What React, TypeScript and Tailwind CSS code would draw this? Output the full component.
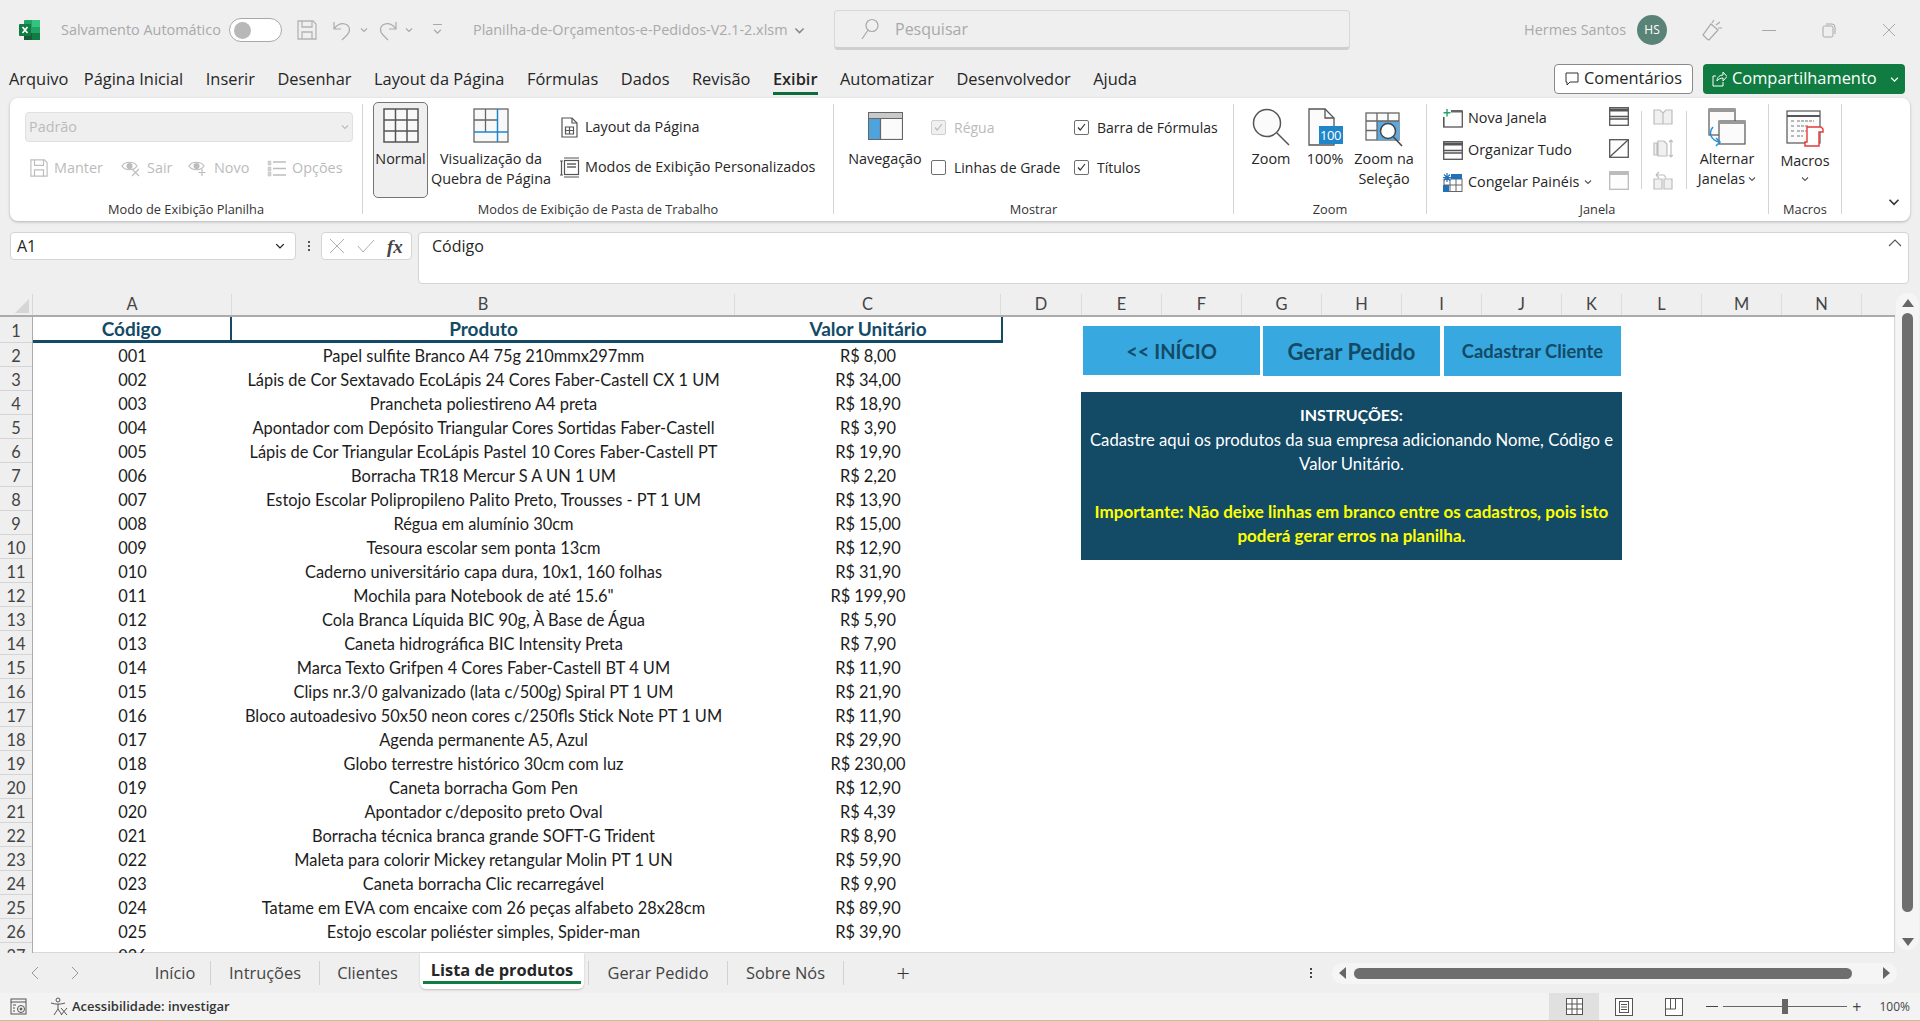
import React from 'react';

const rows: [string, string, string][] = [
  ['001', 'Papel sulfite Branco A4 75g 210mmx297mm', 'R$ 8,00'],
  ['002', 'Lápis de Cor Sextavado EcoLápis 24 Cores Faber-Castell CX 1 UM', 'R$ 34,00'],
  ['003', 'Prancheta poliestireno A4 preta', 'R$ 18,90'],
  ['004', 'Apontador com Depósito Triangular Cores Sortidas Faber-Castell', 'R$ 3,90'],
  ['005', 'Lápis de Cor Triangular EcoLápis Pastel 10 Cores Faber-Castell PT', 'R$ 19,90'],
  ['006', 'Borracha TR18 Mercur S A UN 1 UM', 'R$ 2,20'],
  ['007', 'Estojo Escolar Polipropileno Palito Preto, Trousses - PT 1 UM', 'R$ 13,90'],
  ['008', 'Régua em alumínio 30cm', 'R$ 15,00'],
  ['009', 'Tesoura escolar sem ponta 13cm', 'R$ 12,90'],
  ['010', 'Caderno universitário capa dura, 10x1, 160 folhas', 'R$ 31,90'],
  ['011', 'Mochila para Notebook de até 15.6"', 'R$ 199,90'],
  ['012', 'Cola Branca Líquida BIC 90g, À Base de Água', 'R$ 5,90'],
  ['013', 'Caneta hidrográfica BIC Intensity Preta', 'R$ 7,90'],
  ['014', 'Marca Texto Grifpen 4 Cores Faber-Castell BT 4 UM', 'R$ 11,90'],
  ['015', 'Clips nr.3/0 galvanizado (lata c/500g) Spiral PT 1 UM', 'R$ 21,90'],
  ['016', 'Bloco autoadesivo 50x50 neon cores c/250fls Stick Note PT 1 UM', 'R$ 11,90'],
  ['017', 'Agenda permanente A5, Azul', 'R$ 29,90'],
  ['018', 'Globo terrestre histórico 30cm com luz', 'R$ 230,00'],
  ['019', 'Caneta borracha Gom Pen', 'R$ 12,90'],
  ['020', 'Apontador c/deposito preto Oval', 'R$ 4,39'],
  ['021', 'Borracha técnica branca grande SOFT-G Trident', 'R$ 8,90'],
  ['022', 'Maleta para colorir Mickey retangular Molin PT 1 UN', 'R$ 59,90'],
  ['023', 'Caneta borracha Clic recarregável', 'R$ 9,90'],
  ['024', 'Tatame em EVA com encaixe com 26 peças alfabeto 28x28cm', 'R$ 89,90'],
  ['025', 'Estojo escolar poliéster simples, Spider-man', 'R$ 39,90'],
  ['026', '', ''],
];

const tabs = ['Arquivo', 'Página Inicial', 'Inserir', 'Desenhar', 'Layout da Página', 'Fórmulas', 'Dados', 'Revisão', 'Exibir', 'Automatizar', 'Desenvolvedor', 'Ajuda'];

const columns: [string, string][] = [
  ['A', 'w-[199px]'], ['B', 'w-[503px]'], ['C', 'w-[266px]'], ['D', 'w-[81px]'],
  ['E', 'w-[80px]'], ['F', 'w-[80px]'], ['G', 'w-[80px]'], ['H', 'w-[80px]'],
  ['I', 'w-[80px]'], ['J', 'w-[80px]'], ['K', 'w-[60px]'], ['L', 'w-[80px]'],
  ['M', 'w-[80px]'], ['N', 'w-[80px]'],
];

const Chevron = ({ size = 8, color = '#555' }: { size?: number; color?: string }) => (
  <svg width={size} height={size} viewBox="0 0 8 8" fill="none" stroke={color} strokeWidth="1.1"><path d="M1 2.5 4 5.5 7 2.5" /></svg>
);

const ExcelLogo = () => (
  <svg width="21" height="20" viewBox="0 0 21 20">
    <rect x="5" y="0" width="16" height="20" rx="1" fill="#21a366" />
    <rect x="13" y="0" width="8" height="7" fill="#33c481" />
    <rect x="13" y="13" width="8" height="7" fill="#107c41" />
    <rect x="5" y="13" width="8" height="7" fill="#185c37" />
    <rect x="0" y="4" width="12" height="12" rx="1" fill="#107c41" />
    <path d="M3.5 7 8.5 13M8.5 7 3.5 13" stroke="#fff" strokeWidth="1.7" />
  </svg>
);

const SaveIcon = ({ color, size = 20 }: { color: string; size?: number }) => (
  <svg width={size} height={size} viewBox="0 0 20 20" fill="none" stroke={color} strokeWidth="1.3">
    <path d="M1 1h15l3 3v15H1z" /><path d="M5 1v6h10V1M5 19v-7h10v7" />
  </svg>
);

const UndoIcon = ({ flip = false }: { flip?: boolean }) => (
  <svg width="19" height="21" viewBox="0 0 19 21" fill="none" stroke="#ababab" strokeWidth="1.2" className={flip ? '-scale-x-100' : ''}>
    <path d="M1 2v7h7M1 9c3-4 7-6 11-5 5 1.500 6 7 2 11l-5 5" />
  </svg>
);

const GridIcon = () => (
  <svg width="36" height="35" viewBox="0 0 36 35" fill="#f8f8f8" stroke="#555" strokeWidth="1.500">
    <rect x="1" y="1" width="34" height="33" />
    <path d="M12.500 1v33M24 1v33M1 12h34M1 23h34" fill="none" />
  </svg>
);

const BreakIcon = () => (
  <svg width="36" height="35" viewBox="0 0 36 35" fill="#f8f8f8" stroke="#666" strokeWidth="1.300">
    <rect x="1" y="1" width="34" height="33" />
    <path d="M12.500 1v23M1 12h24" fill="none" />
    <path d="M24.500 1v33M1 24h34" fill="none" stroke="#1a86d0" strokeWidth="1.500" />
  </svg>
);

const PageLayoutIcon = () => (
  <svg width="17" height="21" viewBox="0 0 17 21" fill="#fff" stroke="#555" strokeWidth="1.200">
    <path d="M1 1h10l5 5v14H1z" /><path d="M11 1v5h5" fill="none" />
    <path d="M4.500 10h8v7h-8zM8.500 10v7M4.500 13.500h8" fill="none" />
  </svg>
);

const CustomViewIcon = () => (
  <svg width="21" height="21" viewBox="0 0 21 21" fill="none" stroke="#555" strokeWidth="1.200">
    <path d="M5 1h15M5 20h15M1 4h3M1 18h3M2.500 4v14" />
    <rect x="5.500" y="3.500" width="14" height="14" fill="#fff" />
    <path d="M8 7h9M8 10h9" stroke="#888" strokeWidth="2" />
  </svg>
);

const EyeIcon = ({ plus = false }: { plus?: boolean }) => (
  <svg width="20" height="18" viewBox="0 0 20 18" fill="none" stroke="#bdbdbd" strokeWidth="1.200">
    <path d="M1 7c3-5 12-5 15 0-3 5-12 5-15 0z" /><circle cx="8.500" cy="7" r="2.500" fill="#bdbdbd" />
    {plus ? <path d="M14 10v7M10.500 13.500h7" /> : <path d="M11 10l7 7M18 10l-7 7" />}
  </svg>
);

const ListIcon = () => (
  <svg width="19" height="17" viewBox="0 0 19 17" fill="none" stroke="#bdbdbd" strokeWidth="1.300">
    <path d="M6 2h13M6 8.500h13M6 15h13" /><path d="M1 1h3v4H1zM1 7h3v4H1zM1 12h3v4H1z" fill="#d4d4d4" strokeWidth="0.500" />
  </svg>
);

const NavIcon = () => (
  <svg width="35" height="28" viewBox="0 0 35 28" fill="#fbfbfb" stroke="#666" strokeWidth="1.200">
    <rect x="0.500" y="0.500" width="34" height="27" />
    <rect x="1" y="1" width="33" height="5" fill="#c9c9c9" stroke="none" />
    <rect x="1" y="7" width="11" height="20" fill="#4fa3dc" stroke="none" />
    <path d="M12.500 6v21M1 6.500h33" fill="none" />
  </svg>
);

const ZoomIcon = () => (
  <svg width="38" height="38" viewBox="0 0 38 38" fill="#fbfbfb" stroke="#555" strokeWidth="1.500">
    <circle cx="15" cy="15" r="13.500" /><path d="M25 25 37 37" fill="none" />
  </svg>
);

const HundredIcon = () => (
  <div className="relative w-[35px] h-[38px]">
    <svg width="28" height="38" viewBox="0 0 28 38" fill="#fbfbfb" stroke="#555" strokeWidth="1.300">
      <path d="M1 1h16l9 9v27H1z" /><path d="M17 1v9h9" fill="none" />
    </svg>
    <div className="absolute right-0 bottom-[2px] w-[24px] h-[18px] bg-[#1f86c9] text-white text-[13px] leading-[18px] text-center font-['Open_Sans',sans-serif] tracking-[-0.5px]">100</div>
  </div>
);

const ZoomSelIcon = () => (
  <svg width="39" height="36" viewBox="0 0 39 36" fill="none" stroke="#666" strokeWidth="1.300">
    <rect x="1" y="1" width="33" height="27" fill="#fbfbfb" />
    <rect x="12" y="9" width="22" height="19" fill="#5aa9e0" stroke="none" />
    <path d="M12 1v27M23 1v8M1 9h33M1 18.500h11" />
    <circle cx="23" cy="19" r="7.500" fill="#fff" stroke="#444" strokeWidth="1.500" /><path d="M28.500 25 37 34" stroke="#444" strokeWidth="1.500" />
  </svg>
);

const WinIcon = ({ kind }: { kind: 'new' | 'arrange' | 'freeze' | 'split' | 'hide' | 'unhide' }) => {
  if (kind === 'freeze') {
    return (
      <svg width="20" height="19" viewBox="0 0 20 19" fill="none">
        <rect x="1" y="6" width="18" height="12.500" fill="#fff" stroke="#666" />
        <rect x="0" y="12" width="6" height="7" fill="#1f72b8" />
        <rect x="8" y="1" width="11" height="5" fill="#1f72b8" />
        <path d="M7 6v13M13 6v13M1 12h18" stroke="#666" />
        <path d="M4 0v9M0 4.500h8M1 1.500l6 6M7 1.500l-6 6" stroke="#1f72b8" strokeWidth="1.200" />
      </svg>
    );
  }
  const c = kind === 'unhide' ? '#bbb' : '#555';
  return (
    <svg width="20" height="19" viewBox="0 0 20 19" fill="#fdfdfd" stroke={c} strokeWidth="1.300">
      <rect x="0.700" y={kind === 'new' ? 2 : 0.700} width="18.600" height={kind === 'new' ? 16 : 17.600} />
      {kind === 'new' && <rect x="8" y="1" width="11" height="2.500" fill="#666" stroke="none" />}
      {kind === 'new' && <rect x="0" y="0" width="8" height="8" fill="#fff" stroke="none" />}
      {kind === 'new' && <path d="M4 0v7.500M0.500 3.800h7" fill="none" stroke="#21a366" strokeWidth="1.400" />}
      {kind === 'new' && <path d="M0.700 8v10" fill="none" />}
      {(kind === 'arrange' || kind === 'split') && <path d="M0.700 3h18.600" strokeWidth="3" />}
      {(kind === 'arrange' || kind === 'split') && <path d="M0.700 9.500h18.600M0.700 12h18.600" />}
      {kind === 'hide' && <path d="M0.700 18 19 1" />}
      {kind === 'unhide' && <path d="M0.700 2.500h18.600" strokeWidth="3" />}
    </svg>
  );
};

const SideIcon = ({ v }: { v: number }) => (
  <svg width="20" height="19" viewBox="0 0 20 19" fill="#f0f0f0" stroke="#bdbdbd" strokeWidth="1.200">
    {v === 1 && <path d="M1 3h6l3 3v11H1zM10 6l3-3h6v14h-9z" />}
    {v === 2 && <><path d="M1 4h3v12H1zM5 2h6l3 3v12H5z" /><path d="M18 1v17M16 3l2-2 2 2M16 16l2 2 2-2" fill="none" /></>}
    {v === 3 && <><path d="M1 8h8v10H1zM11 8h8v10h-8z" /><path d="M3 4l3-3M3 4l3 3M3 4h8l2 3" fill="none" /></>}
  </svg>
);

const SwitchIcon = () => (
  <svg width="38" height="40" viewBox="0 0 38 40" fill="#fbfbfb" stroke="#555" strokeWidth="1.200">
    <rect x="1" y="1" width="26" height="26" /><rect x="1" y="1" width="26" height="3" fill="#999" stroke="none" />
    <rect x="11" y="13" width="26" height="23" /><rect x="11" y="13" width="26" height="3" fill="#999" stroke="none" />
    <path d="M5 19c-5 6-2 13 6 15M8 30l4 4-4 4" fill="none" stroke="#2b8fd6" strokeWidth="1.500" />
  </svg>
);

const MacroIcon = () => (
  <svg width="38" height="38" viewBox="0 0 38 38" fill="#fbfbfb" stroke="#555" strokeWidth="1.200">
    <rect x="1" y="1" width="33" height="32" />
    <path d="M1 6h33" strokeWidth="1.800" fill="none" />
    <path d="M5 11h4M11 11h17M5 16h3M11 16h12M5 21h3M11 21h9M5 26h3M11 26h6" fill="none" stroke="#777" strokeDasharray="3 1" />
    <path d="M21 17h14l2 2v3h-4v14H19v-4h2z" fill="#fff" stroke="#e53935" strokeWidth="1.400" />
  </svg>
);

const Check = ({ on = false, off = false }: { on?: boolean; off?: boolean }) => (
  <span className={`w-[15px] h-[15px] flex items-center justify-center rounded-[2px] border ${off ? 'border-[#cfcfcf] bg-[#f0f0f0]' : 'border-[#6e6e6e] bg-white'}`}>
    {on && <svg width="9" height="8" viewBox="0 0 9 8" fill="none" stroke={off ? '#bbb' : '#333'} strokeWidth="1.200"><path d="M1 4.500 3.200 7 8 1" /></svg>}
  </span>
);

const BigButton = ({ icon, lines, w, active }: { icon: React.ReactNode; lines: React.ReactNode[]; w: string; active?: boolean }) => (
  <div className={`${w} flex flex-col items-center shrink-0 ${active ? 'bg-[#efefef] border border-[#757575] rounded-[5px] h-[96px] -mt-[2px] pt-[5px]' : 'pt-[4px]'}`}>
    <div className="h-[41px] flex items-start">{icon}</div>
    {lines.map((l, i) => <div key={i} className="leading-[20px] whitespace-nowrap">{l}</div>)}
  </div>
);

const RibbonGroup = ({ w, label, children }: { w: string; label: string; children: React.ReactNode }) => (
  <div className={`${w} shrink-0 h-[110px] flex flex-col border-r border-[#d4d4d4]`}>
    <div className="flex-1 flex min-h-0">{children}</div>
    <div className="h-[16px] -mb-[3px] leading-[16px] text-center text-[12.8px] text-[#333] whitespace-nowrap">{label}</div>
  </div>
);

const SmallItem = ({ icon, text, w }: { icon: React.ReactNode; text: string; w: string }) => (
  <div className={`${w} flex items-center gap-[6px] text-[#bbb]`}>{icon}<span>{text}</span></div>
);

const CheckRow = ({ text, on, off }: { text: string; on?: boolean; off?: boolean }) => (
  <div className={`h-[20px] flex items-center gap-[8px] whitespace-nowrap text-[14px] ${off ? 'text-[#bbb]' : ''}`}><Check on={on} off={off} /><span>{text}</span></div>
);

const SheetTab = ({ text, w, sep = true }: { text: string; w: string; sep?: boolean }) => (
  <div className={`${w} h-[24px] flex items-center justify-center text-[#444] whitespace-nowrap ${sep ? 'border-r border-[#d2d2d2]' : ''}`}>{text}</div>
);

export default function App() {
  return (
    <div className="w-full h-[1021px] overflow-hidden bg-[#efefef] flex flex-col font-['Open_Sans',sans-serif] text-[14.4px] text-[#262626]">
      {/* title bar */}
      <div className="h-[60px] shrink-0 flex items-center text-[#a9a9a9]">
        <div className="w-[61px] pl-[19px] shrink-0"><ExcelLogo /></div>
        <div className="w-[168px] shrink-0 whitespace-nowrap">Salvamento Automático</div>
        <div className="w-[53px] h-[24px] shrink-0 rounded-full border border-[#a8a8a8] bg-white flex items-center pl-[4px]">
          <div className="w-[17px] h-[17px] rounded-full bg-[#b8b8b8]" />
        </div>
        <div className="ml-[15px] shrink-0"><SaveIcon color="#b4b4b4" /></div>
        <div className="ml-[16px] shrink-0"><UndoIcon /></div>
        <div className="ml-[8px] shrink-0"><Chevron color="#a9a9a9" /></div>
        <div className="ml-[10px] shrink-0"><UndoIcon flip /></div>
        <div className="ml-[8px] shrink-0"><Chevron color="#a9a9a9" /></div>
        <div className="ml-[20px] shrink-0 w-[40px] flex flex-col items-start">
          <div className="w-[9px] border-t border-[#a9a9a9] mb-[2px]" />
          <Chevron color="#a9a9a9" size={9} />
        </div>
        <div className="shrink-0 w-[321px] whitespace-nowrap">Planilha-de-Orçamentos-e-Pedidos-V2.1-2.xlsm</div>
        <div className="shrink-0 w-[40px]"><Chevron color="#888" size={11} /></div>
        <div className="shrink-0 w-[516px] h-[40px] rounded-[4px] border border-[#d8d8d8] border-b-[3px] border-b-[#cfcfcf] flex items-center pl-[26px] gap-[16px] text-[16px]">
          <svg width="18" height="22" viewBox="0 0 18 22" fill="none" stroke="#a9a9a9" strokeWidth="1.200"><circle cx="11" cy="7.500" r="6" /><path d="M7 12 1 21" /></svg>
          <span>Pesquisar</span>
        </div>
        <div className="flex-1" />
        <div className="shrink-0 whitespace-nowrap mr-[11px]">Hermes Santos</div>
        <div className="shrink-0 w-[30px] h-[30px] rounded-full bg-[#5a8377] text-white text-[12px] flex items-center justify-center">HS</div>
        <div className="shrink-0 ml-[34px]">
          <svg width="22" height="24" viewBox="0 0 22 24" fill="none" stroke="#a9a9a9" strokeWidth="1.200">
            <path d="M6 21 2 17 10 6l7 6-9 10zM11 5l2-3M15 7l4-3M17 10l4 0" />
          </svg>
        </div>
        <div className="shrink-0 ml-[39px] w-[14px] border-t border-[#a9a9a9]" />
        <div className="shrink-0 ml-[46px]">
          <svg width="14" height="15" viewBox="0 0 14 15" fill="none" stroke="#a9a9a9"><rect x="1" y="3" width="10" height="11" rx="1.500" /><path d="M4 1h6a3 3 0 0 1 3 3v7" /></svg>
        </div>
        <div className="shrink-0 ml-[46px] mr-[24px]">
          <svg width="14" height="14" viewBox="0 0 14 14" stroke="#a9a9a9"><path d="M1 1l12 12M13 1 1 13" /></svg>
        </div>
      </div>

      {/* ribbon tabs */}
      <div className="h-[38px] shrink-0 flex items-stretch pl-[9px] text-[16.4px]">
        <div className="flex gap-[22.5px]">
          {tabs.map(t => (
            <div key={t} className={`h-[35px] pt-[7px] leading-[24px] whitespace-nowrap border-b-[3px] ${t === 'Exibir' ? 'border-[#0e6b3c] font-semibold' : 'border-transparent'} ${t === 'Arquivo' ? '-mr-[7px]' : ''}`}>{t}</div>
          ))}
        </div>
        <div className="flex-1" />
        <div className="flex gap-[10px] mt-[4px] mr-[15px] h-[30px]">
          <div className="w-[139px] rounded-[4px] border border-[#8a8a8a] bg-white flex items-center justify-center gap-[5px]">
            <svg width="14" height="15" viewBox="0 0 14 15" fill="none" stroke="#333"><path d="M1 1h12v9H5l-3 3V10H1z" /></svg>
            <span className="-mt-[1px]">Comentários</span>
          </div>
          <div className="w-[202px] rounded-[4px] bg-[#107c41] text-white flex items-center pl-[9px] gap-[5px]">
            <svg width="15" height="16" viewBox="0 0 15 16" fill="none" stroke="#fff"><path d="M4 5H1v10h10v-4M5 10c0-4 3-6 6-6V1l4 4.500L11 10V7c-2 0-5 1-6 3z" /></svg>
            <span className="flex-1 whitespace-nowrap -mt-[1px]">Compartilhamento</span>
            <span className="pr-[6px]"><Chevron color="#fff" size={9} /></span>
          </div>
        </div>
      </div>

      {/* ribbon */}
      <div className="h-[123px] shrink-0 mx-[10px] bg-white rounded-[8px] shadow-[0_1px_3px_rgba(0,0,0,0.25)] flex pt-[6px]">
        <RibbonGroup w="w-[353px]" label="Modo de Exibição Planilha">
          <div className="flex flex-col">
            <div className="ml-[15px] mt-[8px] w-[328px] h-[30px] rounded-[4px] border border-[#e0e0e0] bg-[#efefef] flex items-center justify-between px-[3px] text-[#bbb]">
              <span>Padrão</span><Chevron color="#bbb" />
            </div>
            <div className="ml-[20px] mt-[16px] flex h-[20px]">
              <SmallItem icon={<SaveIcon color="#bdbdbd" size={18} />} text="Manter" w="w-[91px]" />
              <SmallItem icon={<EyeIcon />} text="Sair" w="w-[67px]" />
              <SmallItem icon={<EyeIcon plus />} text="Novo" w="w-[79px]" />
              <SmallItem icon={<ListIcon />} text="Opções" w="w-[80px]" />
            </div>
          </div>
        </RibbonGroup>
        <RibbonGroup w="w-[471px]" label="Modos de Exibição de Pasta de Trabalho">
          <div className="pl-[10px] flex items-start">
            <BigButton active w="w-[55px]" icon={<GridIcon />} lines={['Normal']} />
            <BigButton w="w-[126px]" icon={<BreakIcon />} lines={['Visualização da', 'Quebra de Página']} />
            <div className="flex flex-col ml-[5px]">
              <div className="h-[20px] mt-[13px] flex items-center gap-[7px] pl-[2px]"><PageLayoutIcon /><span>Layout da Página</span></div>
              <div className="h-[20px] mt-[20px] flex items-center gap-[5px] whitespace-nowrap"><CustomViewIcon /><span>Modos de Exibição Personalizados</span></div>
            </div>
          </div>
        </RibbonGroup>
        <RibbonGroup w="w-[400px]" label="Mostrar">
          <div className="pl-[11px] flex items-start">
            <BigButton w="w-[80px]" icon={<div className="pt-[4px]"><NavIcon /></div>} lines={['Navegação']} />
            <div className="ml-[6px] w-[143px] mt-[13px] flex flex-col gap-[20px]">
              <CheckRow text="Régua" on off />
              <CheckRow text="Linhas de Grade" />
            </div>
            <div className="mt-[13px] flex flex-col gap-[20px]">
              <CheckRow text="Barra de Fórmulas" on />
              <CheckRow text="Títulos" on />
            </div>
          </div>
        </RibbonGroup>
        <RibbonGroup w="w-[193px]" label="Zoom">
          <div className="pl-[12px] flex items-start">
            <BigButton w="w-[50px]" icon={<ZoomIcon />} lines={['Zoom']} />
            <BigButton w="w-[58px]" icon={<HundredIcon />} lines={['100%']} />
            <BigButton w="w-[60px]" icon={<div className="pt-[4px]"><ZoomSelIcon /></div>} lines={['Zoom na', 'Seleção']} />
          </div>
        </RibbonGroup>
        <RibbonGroup w="w-[342px]" label="Janela">
          <div className="pl-[16px] flex items-start">
            <div className="w-[166px] mt-[3px] flex flex-col gap-[10px]">
              <div className="h-[22px] flex items-center gap-[5px]"><WinIcon kind="new" /><span>Nova Janela</span></div>
              <div className="h-[22px] flex items-center gap-[5px]"><WinIcon kind="arrange" /><span>Organizar Tudo</span></div>
              <div className="h-[22px] flex items-center gap-[5px] whitespace-nowrap"><WinIcon kind="freeze" /><span>Congelar Painéis</span><Chevron /></div>
            </div>
            <div className="w-[33px] h-[78px] mt-[7px] border-r border-[#d4d4d4]">
              <div className="-mt-[4px] flex flex-col gap-[13px]">
                <WinIcon kind="split" /><WinIcon kind="hide" /><WinIcon kind="unhide" />
              </div>
            </div>
            <div className="w-[45px] h-[78px] mt-[7px] pl-[11px] border-r border-[#d4d4d4]">
              <div className="-mt-[4px] flex flex-col gap-[13px]">
                <SideIcon v={1} /><SideIcon v={2} /><SideIcon v={3} />
              </div>
            </div>
            <BigButton w="w-[80px]" icon={<SwitchIcon />} lines={['Alternar', <span className="inline-flex items-center gap-[3px]">Janelas <Chevron /></span>]} />
          </div>
        </RibbonGroup>
        <RibbonGroup w="w-[73px]" label="Macros">
          <div className="w-full flex flex-col items-center pt-[6px]">
            <div className="h-[41px]"><MacroIcon /></div>
            <div className="leading-[20px]">Macros</div>
            <div className="mt-[4px]"><Chevron /></div>
          </div>
        </RibbonGroup>
        <div className="flex-1 flex justify-end items-end pb-[13px] pr-[10px]">
          <Chevron size={12} color="#333" />
        </div>
      </div>

      {/* formula bar */}
      <div className="h-[52px] mt-[11px] shrink-0 flex mx-[10px] items-start text-[16px]">
        <div className="w-[286px] h-[28px] rounded-[4px] border border-[#d4d4d4] bg-white flex items-center justify-between pl-[6px] pr-[10px]">
          <span>A1</span><Chevron size={10} color="#222" />
        </div>
        <div className="w-[25px] h-[28px] flex flex-col items-center justify-center gap-[2px]">
          <div className="w-[2px] h-[2px] bg-[#555]" /><div className="w-[2px] h-[2px] bg-[#555]" /><div className="w-[2px] h-[2px] bg-[#555]" />
        </div>
        <div className="w-[91px] h-[28px] rounded-[4px] border border-[#d4d4d4] bg-white flex items-center pl-[7px] gap-[12px]">
          <svg width="16" height="16" viewBox="0 0 16 16" stroke="#b0b0b0"><path d="M1 1l14 14M15 1 1 15" /></svg>
          <svg width="18" height="14" viewBox="0 0 18 14" fill="none" stroke="#b0b0b0"><path d="M1 7l5 6L17 1" /></svg>
          <span className="font-['Liberation_Serif',serif] italic font-bold text-[19px] leading-none text-[#444]">fx</span>
        </div>
        <div className="ml-[6px] flex-1 h-[52px] rounded-[4px] border border-[#d4d4d4] bg-white flex justify-between pl-[13px] pr-[6px] pt-[3px] mr-[1px]">
          <span className="leading-[20px]">Código</span>
          <span className="pt-[2px]"><svg width="14" height="10" viewBox="0 0 14 10" fill="none" stroke="#555" strokeWidth="1.100"><path d="M1 8 7 2l6 6" /></svg></span>
        </div>
      </div>

      <div className="mt-[13px] flex-1 min-h-0 flex">
        <div className="w-[1895px] shrink-0 -mt-[3px] flex flex-col min-h-0 overflow-hidden">
          {/* column headers */}
          <div className="h-[23px] shrink-0 flex border-b-[2px] border-[#ababab] text-[16.4px] text-[#444] font-['Lato',sans-serif]">
            <div className="w-[33px] shrink-0 flex items-end justify-end pr-[3px] pb-[2px] border-r border-[#d8d8d8]">
              <div className="w-0 h-0 border-l-[14px] border-l-transparent border-b-[14px] border-b-[#d6d6d6]" />
            </div>
            {columns.map(([c, w]) => (
              <div key={c} className={`${w} shrink-0 text-center leading-[20px] pt-[3px] border-r border-[#dcdcdc] h-full`}><span className="block -mt-[3px]">{c}</span></div>
            ))}
          </div>

          {/* sheet */}
          <div className="flex-1 min-h-0 flex overflow-hidden font-['Lato',sans-serif] text-[16.4px] text-[#1c1c1c]">
            <div className="w-[33px] shrink-0 text-[#444] border-r border-[#ababab]">
              <div className="h-[26px] leading-[27px] text-center border-b border-[#d4d4d4]">1</div>
              {rows.map((_, i) => (
                <div key={i} className="h-[24px] leading-[25px] text-center border-b border-[#d4d4d4]">{i + 2}</div>
              ))}
            </div>
            <div className="flex-1 min-w-0 bg-white border-r border-[#d8d8d8] border-b flex">
              <div className="w-[970px] shrink-0">
                <div className="flex h-[26px] font-bold text-[19px] text-[#134a66] border-b-[3px] border-r-[2px] border-[#134a66] leading-[24px] text-center">
                  <div className="w-[199px] border-r-[2px] border-[#134a66]">Código</div>
                  <div className="w-[503px]">Produto</div>
                  <div className="w-[266px]">Valor Unitário</div>
                </div>
                {rows.map(([code, name, price]) => (
                  <div key={code} className="flex h-[24px] leading-[26px] text-center whitespace-nowrap">
                    <div className="w-[199px]">{code}</div>
                    <div className="w-[503px]">{name}</div>
                    <div className="w-[266px]">{price}</div>
                  </div>
                ))}
              </div>
              <div className="pl-[78px] pt-[9px] flex flex-col items-start">
                <div className="flex items-start ml-[2px] font-bold text-[#134a66] h-[50px]">
                  <div className="w-[177px] h-[49px] bg-[#38a9e0] flex items-center justify-center text-[20px]">&lt;&lt; INÍCIO</div>
                  <div className="ml-[3px] w-[177px] h-[50px] bg-[#38a9e0] flex items-center justify-center text-[22px]">Gerar Pedido</div>
                  <div className="ml-[4px] w-[177px] h-[50px] bg-[#38a9e0] flex items-center justify-center pt-[1px] text-[18.4px]">Cadastrar Cliente</div>
                </div>
                <div className="mt-[16px] w-[541px] h-[168px] bg-[#134a66] pt-[12px] text-center text-white leading-[24px] text-[16.7px] whitespace-nowrap">
                  <div className="font-bold text-[16px] -mt-[1px] mb-[1px]">INSTRUÇÕES:</div>
                  <div>Cadastre aqui os produtos da sua empresa adicionando Nome, Código e<br />Valor Unitário.</div>
                  <div className="h-[24px]" />
                  <div className="font-bold text-[#ffff00] text-[17px]">Importante: Não deixe linhas em branco entre os cadastros, pois isto<br />poderá gerar erros na planilha.</div>
                </div>
              </div>
            </div>
          </div>
        </div>
        {/* vertical scrollbar */}
        <div className="w-[23px] -mt-[4px] mb-[3px] ml-[1px] rounded-full bg-[#f5f5f5] flex flex-col items-center pt-[6px]">
          <svg width="12" height="8" viewBox="0 0 12 8" fill="#666"><path d="M6 0l6 8H0z" /></svg>
          <div className="mt-[6px] w-[11px] h-[599px] rounded-full bg-[#6e6e6e]" />
          <div className="flex-1" />
          <svg className="mb-[4px]" width="12" height="8" viewBox="0 0 12 8" fill="#666"><path d="M0 0h12L6 8z" /></svg>
        </div>
      </div>

      {/* sheet tabs */}
      <div className="h-[40px] shrink-0 flex items-center text-[16.4px]">
        <div className="w-[140px] shrink-0 flex pl-[30px] gap-[32px]">
          <svg width="9" height="14" viewBox="0 0 9 14" fill="none" stroke="#999"><path d="M8 1 2 7l6 6" /></svg>
          <svg width="9" height="14" viewBox="0 0 9 14" fill="none" stroke="#999"><path d="M1 1l6 6-6 6" /></svg>
        </div>
        <SheetTab text="Início" w="w-[71px]" />
        <SheetTab text="Intruções" w="w-[109px]" />
        <SheetTab text="Clientes" w="w-[95px]" sep={false} />
        <div className="ml-[5px] w-[164px] h-[36px] -mt-[4px] bg-white rounded-b-[6px] shadow-[0_1px_2px_rgba(0,0,0,0.2)] flex flex-col items-center justify-center">
          <div className="font-bold whitespace-nowrap leading-[22px] border-b-[3px] border-[#107c41] px-[8px] -mb-[2px] -mt-[1px]">Lista de produtos</div>
        </div>
        <div className="w-[5px] h-[24px] border-r border-[#d2d2d2]" />
        <SheetTab text="Gerar Pedido" w="w-[139px]" />
        <SheetTab text="Sobre Nós" w="w-[116px]" />
        <div className="w-[118px] text-center text-[24px] font-light leading-none text-[#333]">+</div>
        <div className="w-[370px] shrink-0 flex justify-end pr-[20px]">
          <div className="flex flex-col gap-[2px]">
            <div className="w-[2px] h-[2px] bg-[#444]" /><div className="w-[2px] h-[2px] bg-[#444]" /><div className="w-[2px] h-[2px] bg-[#444]" />
          </div>
        </div>
        <div className="w-[565px] h-[21px] shrink-0 rounded-full bg-[#f5f5f5] flex items-center pl-[7px] pr-[7px]">
          <svg width="8" height="12" viewBox="0 0 8 12" fill="#666"><path d="M7 0v12L0 6z" /></svg>
          <div className="ml-[7px] w-[498px] h-[11px] rounded-full bg-[#6e6e6e]" />
          <div className="flex-1" />
          <svg width="8" height="12" viewBox="0 0 8 12" fill="#666"><path d="M1 0v12l7-6z" /></svg>
        </div>
      </div>

      {/* status bar */}
      <div className="h-[28px] shrink-0 bg-[#f3f3f3] border-b border-[#bfc48a] flex items-center text-[13px]">
        <svg className="ml-[10px]" width="18" height="18" viewBox="0 0 18 18" fill="none" stroke="#555">
          <rect x="1" y="1" width="15" height="15" /><path d="M1 4h15M3 7h3M3 10h2M3 13h2" /><circle cx="11" cy="11" r="3.500" /><circle cx="11" cy="11" r="1" fill="#555" />
        </svg>
        <svg className="ml-[22px]" width="18" height="19" viewBox="0 0 18 19" fill="none" stroke="#555">
          <circle cx="8" cy="3" r="2" /><path d="M1 6c4 1.500 10 1.500 14 0M8 7v5M8 12l-4 6M8 12l4 6M11 11l6 7M17 11l-6 7" />
        </svg>
        <span className="ml-[4px] font-semibold text-[#333] whitespace-nowrap">Acessibilidade: investigar</span>
        <div className="flex-1" />
        <div className="w-[50px] h-full bg-[#e0e0e0] flex items-center justify-center">
          <svg width="17" height="17" viewBox="0 0 17 17" fill="#fff" stroke="#555"><rect x="0.500" y="0.500" width="16" height="16" /><path d="M6 0.500v16M11 0.500v16M0.500 6h16M0.500 11h16" /></svg>
        </div>
        <div className="w-[50px] flex justify-center">
          <svg width="18" height="18" viewBox="0 0 18 18" fill="#fff" stroke="#555"><rect x="0.500" y="0.500" width="17" height="17" /><rect x="4.500" y="3.500" width="9" height="11" /><path d="M6 6.500h6M6 9h6M6 11.500h6" /></svg>
        </div>
        <div className="w-[50px] flex justify-center">
          <svg width="18" height="18" viewBox="0 0 18 18" fill="#fff" stroke="#555"><rect x="0.500" y="0.500" width="17" height="17" /><path d="M0.500 11h10V0.500M5.500 0.500V11" fill="none" /></svg>
        </div>
        <div className="w-[12px] ml-[7px] border-t-[1.5px] border-[#444]" />
        <div className="ml-[5px] relative w-[124px] h-[1px] bg-[#666]">
          <div className="absolute left-[59px] -top-[7px] w-[6px] h-[15px] bg-[#666]" />
        </div>
        <div className="ml-[5px] text-[16px] leading-none text-[#444]">+</div>
        <div className="ml-[18px] mr-[10px] text-[12px] text-[#444]">100%</div>
      </div>
    </div>
  );
}
